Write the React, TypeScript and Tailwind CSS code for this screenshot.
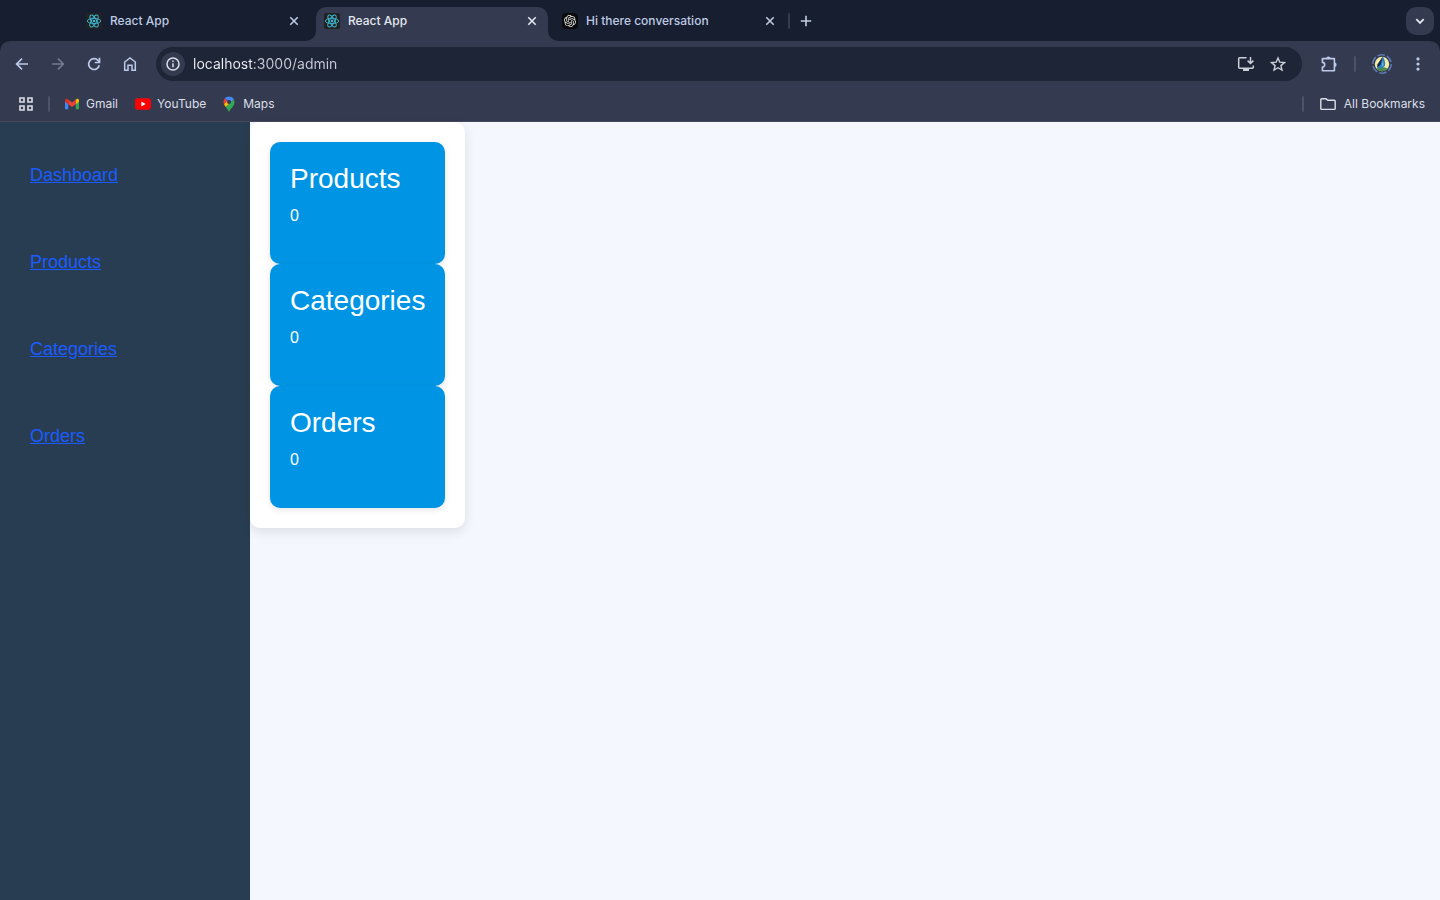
import type { ReactNode } from "react";
import { SiOpenai } from "react-icons/si";

type IconProps = { className?: string };

function ReactFavicon() {
  return (
    <span className="flex size-4 shrink-0 items-center justify-center rounded-xs bg-[#222222]">
      <svg viewBox="0 0 16 16" className="size-4" fill="none" stroke="#3cbcd8" strokeWidth="0.9">
        <ellipse cx="8" cy="8" rx="6.7" ry="2.6" />
        <ellipse cx="8" cy="8" rx="6.7" ry="2.6" transform="rotate(60 8 8)" />
        <ellipse cx="8" cy="8" rx="6.7" ry="2.6" transform="rotate(120 8 8)" />
        <circle cx="8" cy="8" r="1.3" fill="#3cbcd8" stroke="none" />
      </svg>
    </span>
  );
}

function ChatFavicon() {
  return (
    <span className="flex size-4 shrink-0 items-center justify-center rounded-sm bg-[#0b0b0b] text-[#e8e8e8]">
      <SiOpenai size={12} />
    </span>
  );
}

function CloseIcon() {
  return (
    <svg viewBox="0 0 16 16" className="size-4" fill="none" stroke="currentColor" strokeWidth="1.6">
      <path d="M4.3 4.3l7.4 7.4M11.7 4.3l-7.4 7.4" />
    </svg>
  );
}

function BackIcon({ className }: IconProps) {
  return (
    <svg viewBox="0 0 16 16" className={className} fill="none" stroke="currentColor" strokeWidth="1.6">
      <path d="M14 8H3M8 2.6L2.6 8L8 13.4" />
    </svg>
  );
}

function ReloadIcon() {
  return (
    <svg viewBox="0 0 16 16" className="size-4" fill="none" stroke="currentColor" strokeWidth="1.7">
      <path d="M13.3 9.3A5.4 5.4 0 1 1 12 4.4L13.2 5.8" />
      <path d="M13.5 1.8v4.7H8.8" />
    </svg>
  );
}

function HomeIcon() {
  return (
    <svg viewBox="0 0 16 16" className="size-4" fill="none" stroke="currentColor" strokeWidth="1.5">
      <path d="M2.7 6L8 1.9L13.3 6v8.3H10V9.2H6v5.1H2.7z" />
    </svg>
  );
}

function InfoIcon() {
  return (
    <svg viewBox="0 0 16 16" className="size-4" fill="none" stroke="currentColor" strokeWidth="1.5">
      <circle cx="8" cy="8" r="6" />
      <path d="M8 7.2v4M8 4.6v1.5" />
    </svg>
  );
}

function InstallIcon() {
  return (
    <svg viewBox="0 0 18 18" className="size-[18px]" fill="none" stroke="currentColor" strokeWidth="1.5">
      <path d="M9.500 2.800H2.600a.9.900 0 0 0-.9.900v8.600c0 .5.400.900.9.900h12.800c.5 0 .9-.4.9-.9V10.600" />
      <path d="M13.500 2v6.200M10.600 5.600l2.900 2.900l2.900-2.900" />
      <path d="M6 14.800h6" strokeWidth="2.400" />
    </svg>
  );
}

function StarIcon() {
  return (
    <svg viewBox="0 0 16 16" className="size-4" fill="none" stroke="currentColor" strokeWidth="1.4">
      <path d="M8 2l1.800 4.200l4.600.4l-3.500 3l1.100 4.500L8 11.700l-4 2.400l1.100-4.500l-3.500-3l4.600-.4z" />
    </svg>
  );
}

function PuzzleIcon() {
  return (
    <svg viewBox="0 0 18 18" className="size-[18px]" fill="none" stroke="currentColor" strokeWidth="1.600">
      <path d="M2.400 3.600H14.400V15.800H2.400V12a2.300 2.300 0 0 0 0-4.600z" strokeLinejoin="round" />
      <path d="M6.200 3.600a2.200 2.200 0 0 1 4.400 0zM14.400 7.500a2.200 2.200 0 0 1 0 4.400z" fill="currentColor" stroke="none" />
    </svg>
  );
}

function DotsIcon() {
  return (
    <svg viewBox="0 0 16 16" className="size-4" fill="currentColor">
      <circle cx="8" cy="2.900" r="1.600" />
      <circle cx="8" cy="8" r="1.600" />
      <circle cx="8" cy="13.100" r="1.600" />
    </svg>
  );
}

function Avatar() {
  return (
    <svg viewBox="0 0 20 20" className="size-5">
      <circle cx="10" cy="10" r="9.200" fill="none" stroke="#5b78b5" strokeWidth="1.500" strokeDasharray="7.600 2" />
      <circle cx="10" cy="10" r="7.200" fill="#f3eca6" />
      <path d="M4.500 14.700c3-1.800 8-1.800 11 0a7.200 7.200 0 0 1-11 0z" fill="#4d8b4a" />
      <path d="M10.800 2.500c2 2.800 2.700 6.300 2.200 9.200l-3.200 2.800l-4.300-.4c.2-3 3.600-6 5.300-11.600z" fill="#2f7fc0" />
      <path d="M10.800 2.500L5.500 10.300l-.5 3.500l3.500-3z" fill="#102746" />
      <path d="M10.900 6l.8 5l-2 2z" fill="#69b7e8" />
    </svg>
  );
}

function AppsIcon() {
  return (
    <svg viewBox="0 0 14 14" className="size-3.5" fill="none" stroke="currentColor" strokeWidth="1.600">
      <path d="M1 1h4v4H1zM9 1h4v4H9zM1 9h4v4H1zM9 9h4v4H9z" />
    </svg>
  );
}

function GmailIcon() {
  return (
    <svg viewBox="0 0 14 12" className="h-3 w-3.5">
      <path d="M0 3.200v7.200c0 .5.400.900.900.900h2.300V5.500z" fill="#4285f4" />
      <path d="M14 3.200v7.200c0 .5-.4.900-.9.900h-2.300V5.500z" fill="#34a853" />
      <path d="M10.800 1.600v4.600L14 3.800V2.300c0-1.500-1.600-2-2.700-1.100z" fill="#fbbc04" />
      <path d="M3.200 1.600L7 4.400l3.800-2.800v4.600L7 9L3.200 6.200z" fill="#ea4335" />
      <path d="M0 3.800V2.300C0 .8 1.600.3 2.700 1.200l.5.400v4.600z" fill="#d62f26" />
    </svg>
  );
}

function YouTubeIcon() {
  return (
    <svg viewBox="0 0 16 12" className="h-3 w-4">
      <rect y=".3" width="16" height="11.400" rx="2.600" fill="#ff0000" />
      <path d="M6.400 3.600v4.800L10.600 6z" fill="#ffffff" />
    </svg>
  );
}

function MapsIcon() {
  return (
    <svg viewBox="0 0 12 16" className="h-4 w-3">
      <path d="M6 .5c-1.700 0-3.200.7-4.200 1.900l3 2.500L8.200.9A6 6 0 0 0 6 .5z" fill="#4285f4" />
      <path d="M8 .8L4.700 4.800A1.900 1.900 0 0 1 7.800 6.900l3-3.600A5.500 5.500 0 0 0 8 .8z" fill="#4a8cf5" />
      <path d="M1.800 2.400A5.400 5.400 0 0 0 1.200 8.500L4.500 5z" fill="#ea4335" />
      <path d="M4.500 5L1.100 8.300c.4 1 1 1.800 1.700 2.600L7.600 7.100A2 2 0 0 1 4.500 5z" fill="#fbbc04" />
      <path d="M10.900 3.400L2.800 11c1.300 1.700 2.100 2.700 2.500 4.100c.2.600 1.200.6 1.400 0c.7-2.900 4.800-4.600 4.800-9.100c0-1-.2-1.900-.6-2.600z" fill="#34a853" />
      <circle cx="6" cy="6" r="1.900" fill="#343b50" />
    </svg>
  );
}

function FolderIcon() {
  return (
    <svg viewBox="0 0 16 14" className="h-3.5 w-4" fill="none" stroke="currentColor" strokeWidth="1.400">
      <path d="M1.700 1.700h4.400l1.600 1.600h6.600c.5 0 .9.400.9.900v7.300c0 .5-.4.900-.9.900H1.700a.9.900 0 0 1-.9-.9V2.600c0-.5.400-.9.900-.9z" />
    </svg>
  );
}

function IconButton({ label, children, className = "" }: { label: string; children: ReactNode; className?: string }) {
  return (
    <button type="button" aria-label={label} className={`flex size-7 shrink-0 items-center justify-center rounded-full ${className}`}>
      {children}
    </button>
  );
}

function Tab({ title, icon, active = false }: { title: string; icon: ReactNode; active?: boolean }) {
  return (
    <div
      className={`relative flex h-[34px] w-[232px] items-center gap-2 px-2 pb-[6px] ${
        active ? "rounded-t-[10px] bg-[#343b50] text-[#e4e7ef]" : "text-[#bfcae3]"
      }`}
    >
      {active && (
        <>
          <svg viewBox="0 0 10 10" className="absolute bottom-0 -left-2.5 size-2.5 fill-[#343b50]">
            <path d="M10 0v10H0A10 10 0 0 0 10 0z" />
          </svg>
          <svg viewBox="0 0 10 10" className="absolute -right-2.5 bottom-0 size-2.5 fill-[#343b50]">
            <path d="M0 0v10h10A10 10 0 0 1 0 0z" />
          </svg>
        </>
      )}
      {icon}
      <span className="flex-1 truncate">{title}</span>
      <button type="button" aria-label={`Close ${title}`}>
        <CloseIcon />
      </button>
    </div>
  );
}

function TabStrip() {
  return (
    <div className="flex h-[41px] items-end bg-[#161e30] pr-1.5 pl-[78px]">
      <div className="flex gap-1.5">
        <Tab title="React App" icon={<ReactFavicon />} />
        <Tab title="React App" icon={<ReactFavicon />} active />
        <Tab title="Hi there conversation" icon={<ChatFavicon />} />
      </div>
      <div className="flex h-[34px] items-center pb-[6px] pl-0.5">
        <span className="h-4 w-0.5 rounded-full bg-[#343b50]" />
        <button type="button" aria-label="New tab" className="ml-2 text-[#c3cde4]">
          <svg viewBox="0 0 16 16" className="size-4" fill="none" stroke="currentColor" strokeWidth="1.600">
            <path d="M8 2.800v10.400M2.800 8h10.400" />
          </svg>
        </button>
      </div>
      <button
        type="button"
        aria-label="Search tabs"
        className="mb-[6px] ml-auto flex size-7 items-center justify-center rounded-[10px] bg-[#343b50] text-[#e4e7ef]"
      >
        <svg viewBox="0 0 16 16" className="size-4" fill="none" stroke="currentColor" strokeWidth="1.800">
          <path d="M4.300 6.200L8 9.900l3.700-3.700" />
        </svg>
      </button>
    </div>
  );
}

function AddressBar() {
  return (
    <div className="flex items-center px-2 pt-[6px] pb-[6px] text-[#bccae9]">
      <div className="flex gap-2">
        <IconButton label="Back">
          <BackIcon className="size-4" />
        </IconButton>
        <IconButton label="Forward" className="text-[#747b8e]">
          <BackIcon className="size-4 rotate-180" />
        </IconButton>
        <IconButton label="Reload">
          <ReloadIcon />
        </IconButton>
        <IconButton label="Home">
          <HomeIcon />
        </IconButton>
      </div>
      <div className="ml-3 flex h-[34px] flex-1 items-center rounded-full bg-[#1d2537] pr-4 pl-[5px] text-[#cdd0d9]">
        <button
          type="button"
          aria-label="View site information"
          className="flex size-6 items-center justify-center rounded-full bg-[#343b50] text-[#dcdfe7]"
        >
          <InfoIcon />
        </button>
        <input
          type="text"
          aria-label="Address"
          defaultValue="localhost:3000/admin"
          className="ml-2 min-w-0 flex-1 bg-linear-to-r from-[#f0f2f6] from-[60px] to-[#c9ccd5] to-[60px] bg-clip-text pb-0.5 text-[14px] font-normal text-transparent outline-none"
        />
        <div className="flex items-center gap-[15px]">
          <button type="button" aria-label="Install app">
            <InstallIcon />
          </button>
          <button type="button" aria-label="Bookmark this page">
            <StarIcon />
          </button>
        </div>
      </div>
      <IconButton label="Extensions" className="ml-[13px]">
        <PuzzleIcon />
      </IconButton>
      <span className="mr-3 ml-[11px] h-4 w-0.5 rounded-full bg-[#4a536a]" />
      <IconButton label="Profile">
        <Avatar />
      </IconButton>
      <IconButton label="Menu" className="ml-2">
        <DotsIcon />
      </IconButton>
    </div>
  );
}

function BookmarksBar() {
  return (
    <nav aria-label="Bookmarks" className="flex h-[34px] items-center pr-[15px] pl-[19px] font-normal text-[#dcdfe7]">
      <button type="button" aria-label="Apps">
        <AppsIcon />
      </button>
      <span className="mx-[15px] h-4 w-0.5 rounded-full bg-[#4a536a]" />
      <div className="flex gap-[17px]">
        <a href="#gmail" className="flex items-center gap-[7px]">
          <GmailIcon />
          Gmail
        </a>
        <a href="#youtube" className="flex items-center gap-1.5">
          <YouTubeIcon />
          YouTube
        </a>
        <a href="#maps" className="flex items-center gap-2">
          <MapsIcon />
          Maps
        </a>
      </div>
      <span className="ml-auto h-4 w-0.5 rounded-full bg-[#4a536a]" />
      <button type="button" className="ml-4 flex items-center gap-2">
        <FolderIcon />
        All Bookmarks
      </button>
    </nav>
  );
}

const links = ["Dashboard", "Products", "Categories", "Orders"];

const stats = [
  { title: "Products", count: 0 },
  { title: "Categories", count: 0 },
  { title: "Orders", count: 0 },
];

export default function App() {
  return (
    <div className="flex min-h-screen flex-col bg-[#f4f7fe]">
      <header className="bg-[#161e30] font-['Inter',sans-serif] text-[12px] font-medium">
        <TabStrip />
        <div className="rounded-t-[10px] border-b border-[#474a5c] bg-[#343b50]">
          <AddressBar />
          <BookmarksBar />
        </div>
      </header>
      <div className="flex flex-1 font-['Liberation_Sans',Arial,sans-serif]">
        <aside className="w-[250px] shrink-0 bg-[#293d52] px-[30px] pt-[10px]">
          <ul>
            {links.map((label) => (
              <li key={label} className="py-[30px] text-[18px] leading-[27px]">
                <a href={`#${label.toLowerCase()}`} className="text-[#1a5cff] underline">
                  {label}
                </a>
              </li>
            ))}
          </ul>
        </aside>
        <main className="self-start rounded-[10px] bg-white p-5 shadow-[0_4px_12px_rgba(0,0,0,0.1)]">
          {stats.map(({ title, count }) => (
            <section key={title} className="rounded-[10px] bg-[#0095e4] px-5 pt-5 pb-9 text-white shadow-[0_2px_6px_rgba(0,0,0,0.1)]">
              <h2 className="mb-2 text-[28px] leading-[34px]">{title}</h2>
              <p className="text-[16px] leading-6">{count}</p>
            </section>
          ))}
        </main>
      </div>
    </div>
  );
}
